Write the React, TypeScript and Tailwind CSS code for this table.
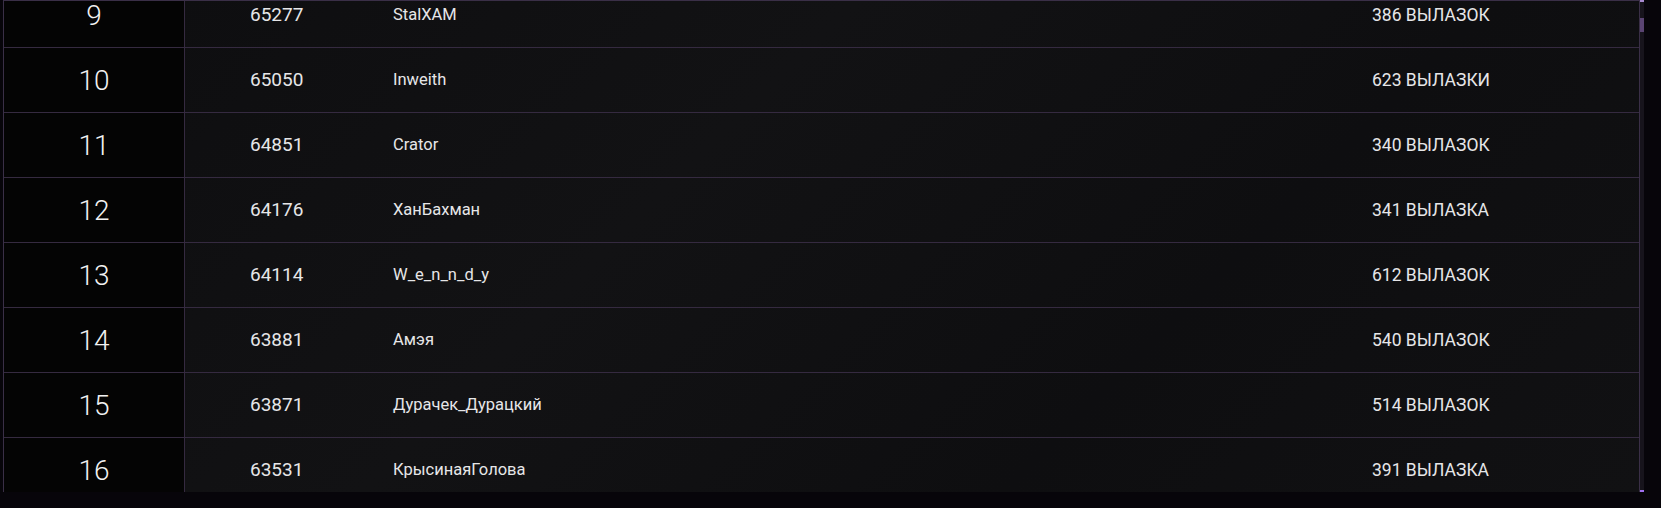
type Row = {
  rank: number;
  score: number;
  name: string;
  sorties: string;
};

const rows: Row[] = [
  { rank: 9, score: 65277, name: 'StalXAM', sorties: '386 ВЫЛАЗОК' },
  { rank: 10, score: 65050, name: 'Inweith', sorties: '623 ВЫЛАЗКИ' },
  { rank: 11, score: 64851, name: 'Crator', sorties: '340 ВЫЛАЗОК' },
  { rank: 12, score: 64176, name: 'ХанБахман', sorties: '341 ВЫЛАЗКА' },
  { rank: 13, score: 64114, name: 'W_e_n_n_d_y', sorties: '612 ВЫЛАЗОК' },
  { rank: 14, score: 63881, name: 'Амэя', sorties: '540 ВЫЛАЗОК' },
  { rank: 15, score: 63871, name: 'Дурачек_Дурацкий', sorties: '514 ВЫЛАЗОК' },
  { rank: 16, score: 63531, name: 'КрысинаяГолова', sorties: '391 ВЫЛАЗКА' },
];

export default function App() {
  return (
    <div className="w-[1661px] h-[508px] bg-[#07050a] font-['Roboto',sans-serif] text-[#e6e6e8]">
      <div className="flex h-[492px] pl-[3px]">
        {/* TABLE */}
        <div className="w-[1637px] h-full overflow-hidden border-l border-t border-r border-[#3a2f47] bg-[linear-gradient(135deg,#0d0d0f_0%,#121214_40%,#0e0e10_70%,#111113_100%)]">
          <div className="-mt-[18px]">
            {rows.map((r) => (
              <div
                key={r.rank}
                className="grid grid-cols-[181px_208px_979px_1fr] h-[65px] border-b border-[#352a40]"
              >
                <div className="flex items-center justify-center bg-[#040404] border-r border-[#352a40] text-[28px] font-light text-[#f2f2f2] pt-[1px]">
                  {r.rank}
                </div>
                <div className="flex items-center pl-[65px] text-[19px]">{r.score}</div>
                <div className="flex items-center text-[16.5px]">{r.name}</div>
                <div className="flex items-center text-[17.5px]">{r.sorties}</div>
              </div>
            ))}
          </div>
        </div>

        {/* SCROLLBAR */}
        <div className="w-[4px] h-full bg-[#17141c] flex flex-col">
          <div className="h-[2px] bg-[#a88ad0]" />
          <div className="h-[16px]" />
          <div className="h-[14px] bg-[#5a4472]" />
          <div className="flex-1" />
          <div className="h-[2px] bg-[#a070f0]" />
        </div>
      </div>
    </div>
  );
}
